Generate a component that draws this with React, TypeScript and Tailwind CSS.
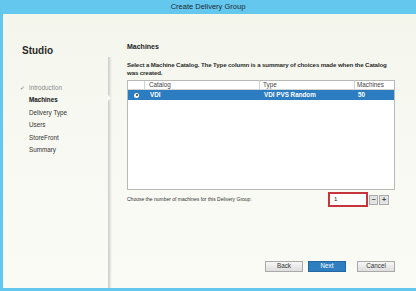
import React from 'react';

const steps = [
  { label: 'Introduction', done: true },
  { label: 'Machines', active: true },
  { label: 'Delivery Type' },
  { label: 'Users' },
  { label: 'StoreFront' },
  { label: 'Summary' },
];

const font = { fontFamily: '"Liberation Sans", Arial, sans-serif' };

export default function App() {
  return (
    <div className="w-[416px] h-[291px] bg-[#64c7ee] flex flex-col overflow-hidden" style={font}>
      {/* title bar */}
      <div className="h-[14px] flex items-center justify-center text-[7.5px] text-[#1d2a33]">
        Create Delivery Group
      </div>

      <div className="flex-1 flex ml-[3px] mb-[3px] bg-gradient-to-b from-[#f4f6ec] via-[#f8f9f3] to-[#fafbf4]">
        {/* left: steps */}
        <div className="w-[105px] flex flex-col pl-[19px]">
          <div className="mt-[31px] text-[10px] leading-[12px] font-semibold text-[#2a2a2a]">Studio</div>
          <ul className="mt-[25px] -ml-[2px] flex flex-col">
            {steps.map((s) => (
              <li
                key={s.label}
                className={
                  'h-[12.4px] leading-[12.4px] text-[6.3px] flex items-center ' +
                  (s.done ? 'text-[#8a8a8a]' : s.active ? 'text-[#111] font-bold' : 'text-[#333]')
                }
              >
                <span className="w-[9px] text-[6px] text-[#777]">{s.done ? '✓' : ''}</span>
                {s.label}
              </li>
            ))}
          </ul>
        </div>

        {/* separator shadow */}
        <div className="relative w-[4px] mt-[43px] bg-gradient-to-r from-[#c9cac6] via-[#e2e3de] to-transparent">
          <div className="absolute left-0 top-[38px] w-0 h-0 border-y-[3px] border-y-transparent border-l-[3px] border-l-[#fbfbf7]" />
        </div>

        {/* right: content */}
        <div className="flex-1 flex flex-col pl-[15px] pr-[21px]">
          <div className="mt-[28px] text-[7px] leading-[9px] font-semibold text-[#222]">Machines</div>
          <p className="mt-[10px] text-[6.1px] leading-[8px] font-semibold tracking-[-0.1px] text-[#2a2a2a]">
            Select a Machine Catalog. The Type column is a summary of choices made when the Catalog was created.
          </p>

          <div className="mt-[3px] h-[110px] bg-white border border-[#b9bab6]">
            <div className="h-[9px] flex text-[6.3px] text-[#444] border-b border-[#d4d4d4]">
              <div className="w-[17px] border-r border-[#d4d4d4]" />
              <div className="w-[115px] pl-[4px] leading-[8px] border-r border-[#d4d4d4]">Catalog</div>
              <div className="w-[95px] pl-[3px] leading-[8px] border-r border-[#d4d4d4]">Type</div>
              <div className="flex-1 pl-[2px] leading-[8px]">Machines</div>
            </div>
            <div className="h-[10px] flex items-center bg-[#2b7cc0] text-[6.3px] text-white font-semibold">
              <div className="w-[17px] flex items-center justify-center">
                <span className="w-[5px] h-[5px] rounded-full bg-white flex items-center justify-center">
                  <span className="w-[2px] h-[2px] rounded-full bg-[#333]" />
                </span>
              </div>
              <div className="w-[115px] pl-[5px]">VDI</div>
              <div className="w-[95px] pl-[4px]">VDI PVS Random</div>
              <div className="flex-1 pl-[3px]">50</div>
            </div>
          </div>

          <div className="mt-[2px] flex items-center justify-between pr-[6px]">
            <span className="text-[5px] text-[#333]">Choose the number of machines for this Delivery Group:</span>
            <div className="flex items-center">
              <div className="w-[40px] h-[15px] border-2 border-[#c6353c] bg-white text-[6px] text-[#222] pl-[4px] leading-[11px]">1</div>
              <div className="ml-[1px] w-[9px] h-[10px] bg-[#e3e3e3] border border-[#aaa] flex items-center justify-center text-[7px] font-bold text-[#444] leading-none">−</div>
              <div className="ml-[1px] w-[10px] h-[10px] bg-[#e3e3e3] border border-[#aaa] flex items-center justify-center text-[7px] font-bold text-[#444] leading-none">+</div>
            </div>
          </div>

          <div className="mt-[54px] flex justify-end text-[6.3px]">
            <button className="w-[38px] h-[11px] border border-[#a9a9a9] bg-gradient-to-b from-[#f6f6f6] to-[#dedede] text-[#333] leading-none">Back</button>
            <button className="ml-[5px] w-[38px] h-[11px] border border-[#2366a0] bg-[#2e7fc2] text-white leading-none">Next</button>
            <button className="ml-[11px] w-[38px] h-[11px] border border-[#a9a9a9] bg-gradient-to-b from-[#f6f6f6] to-[#dedede] text-[#333] leading-none">Cancel</button>
          </div>
        </div>
      </div>
    </div>
  );
}
